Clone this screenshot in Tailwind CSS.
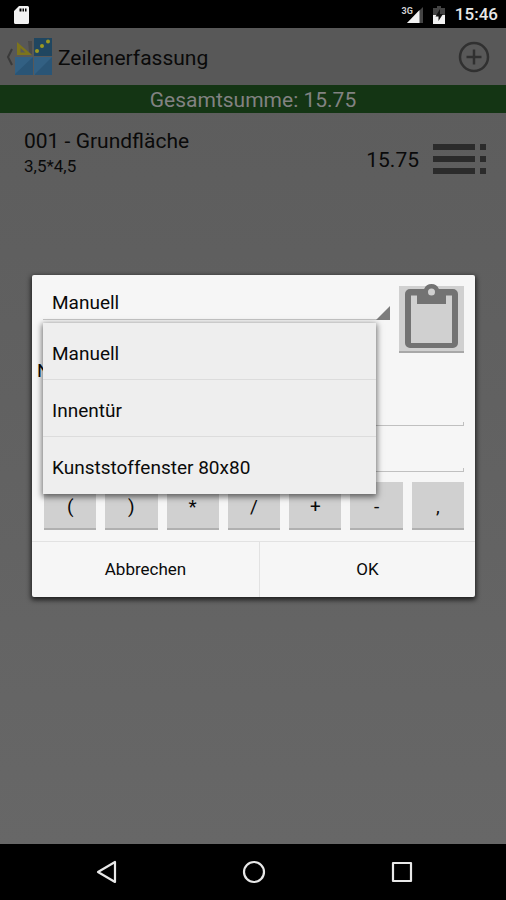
<!DOCTYPE html>
<html lang="de">
<head>
  <meta charset="UTF-8" />
  <meta name="viewport" content="width=device-width, initial-scale=1" />
  <title>Zeilenerfassung</title>
  <script src="https://cdn.jsdelivr.net/npm/@tailwindcss/browser@4"></script>
</head>
<body class="flex min-h-screen flex-col bg-black font-[Roboto,sans-serif] text-[#0a0a0a]">

  <!-- status bar -->
  <div class="flex h-7 items-center justify-between px-2 pt-0.5 text-white">
    <svg class="ml-1.5 h-[18px] w-[15px]" viewBox="0 0 15 18" fill="#f2f2f2">
      <path fill-rule="evenodd" d="M5 0h8.500a1.500 1.500 0 0 1 1.500 1.500v15a1.500 1.500 0 0 1-1.500 1.500h-12a1.500 1.500 0 0 1-1.500-1.500V5zM5.500 2.500v3h2v-3zm3 0v3h1.500v-3zm2.500 0v3h1.500v-3z" />
    </svg>
    <div class="flex items-center gap-2.5">
      <div class="flex items-start">
        <span class="-mr-1.5 text-[9px] leading-[9px] font-bold text-[#d0d0d0]">3G</span>
        <svg class="h-4 w-4" viewBox="0 0 16 16">
          <path d="M16 0v16H0z" fill="#444" />
          <path d="M12.500 3v13H0z" fill="#f2f2f2" />
        </svg>
      </div>
      <svg class="h-[18px] w-3" viewBox="0 0 12 18">
        <path d="M4 0h4v2h4v16H0V2h4z" fill="#444" />
        <path d="M0 9h12v9H0z" fill="#f2f2f2" />
        <path d="M7 3L2.500 10.500H5.500V15L10 8H7z" fill="#111" />
      </svg>
      <span class="text-[17px] font-medium text-[#e8e8e8]">15:46</span>
    </div>
  </div>

  <main class="relative flex grow flex-col bg-linear-to-b from-[#5c5c5c] to-[#676767]">
    <header class="flex h-[57px] items-center bg-[#585858] pl-1.5">
      <a href="#" class="flex items-center" aria-label="Zurück">
        <svg class="h-5 w-2" viewBox="0 0 8 20" fill="none" stroke="#3a3a3a" stroke-width="2">
          <path d="M6 2L2 10l4 8" />
        </svg>
        <svg class="h-10 w-10" viewBox="0 0 40 40">
          <path d="M20 1h18v18H20z" fill="#204660" />
          <path d="M1 20h18v18H1zM20 20h18v18H20z" fill="#326083" />
          <path d="M1 37L19 20v18H1zM21 37L38 20v18H21z" fill="#2a5576" />
          <path d="M14 4h4v14l-3-3z" fill="#4a4a4a" />
          <path fill-rule="evenodd" d="M3 5l15 13H3zM6.500 11v4.500h5z" fill="#7d741c" />
          <g fill="#9c9a20"><circle cx="23" cy="14" r="2" /><circle cx="28" cy="9" r="2" /><circle cx="34" cy="4.500" r="2" /></g>
        </svg>
      </a>
      <h1 class="ml-1 pt-1 text-[21px]">Zeilenerfassung</h1>
      <button type="button" class="mr-4 ml-auto" aria-label="Hinzufügen">
        <svg class="h-8 w-8" viewBox="0 0 32 32" fill="none" stroke="#303030" stroke-width="2.500">
          <circle cx="16" cy="16" r="14" />
          <path d="M16 8.500v15M8.500 16h15" />
        </svg>
      </button>
    </header>

    <div class="h-7 bg-[#143514] text-center text-[21px] leading-[31px] text-[#828282]">Gesamtsumme: 15.75</div>

    <ul>
      <li class="flex items-center py-3 pr-[19px] pl-6">
        <div>
          <div class="text-[21px] leading-[30px]">001 - Grundfläche</div>
          <div class="text-[17px] leading-5">3,5*4,5</div>
        </div>
        <span class="mt-5 ml-auto text-[21px]">15.75</span>
        <button type="button" class="mt-4 ml-3.5" aria-label="Menü">
          <svg class="h-8 w-[54px]" viewBox="0 0 54 32" fill="#2b2b2b">
            <path d="M0 1h42v6H0zM0 13h42v6H0zM0 25h42v6H0zM47 1h6v6h-6zM47 13h6v6h-6zM47 25h6v6h-6z" />
          </svg>
        </button>
      </li>
    </ul>

    <!-- dialog -->
    <div class="absolute inset-0 flex items-center pr-[31px] pl-8">
      <form role="dialog" class="w-full rounded-xs bg-[#f6f6f6] shadow-[0_2px_5px_1px_rgba(0,0,0,0.7)]">
        <div class="px-[11px] py-[11px]">
          <div class="flex gap-[9px]">
            <div class="relative grow">
              <select id="type" aria-label="Typ" class="h-[34px] w-full appearance-none border-b border-[#c6c6c6] px-[9px] pt-0.5 text-[19px]">
                <option>Manuell</option>
                <option>Innentür</option>
                <option>Kunststoffenster 80x80</option>
              </select>
              <svg class="absolute top-5 right-0 h-3.5 w-3.5" viewBox="0 0 14 14"><path d="M14 0v14H0z" fill="#7c7c7c" /></svg>
              <ul id="type-list" role="listbox" class="absolute top-[37px] right-3.5 left-0 z-10 divide-y divide-[#dcdcdc] bg-[#eee] shadow-[0_2px_6px_1px_rgba(0,0,0,0.55)]">
                <li role="option" class="h-[57px] cursor-pointer px-[9px] text-[19px] leading-[61px]">Manuell</li>
                <li role="option" class="h-[57px] cursor-pointer px-[9px] text-[19px] leading-[61px]">Innentür</li>
                <li role="option" class="h-[57px] cursor-pointer px-[9px] text-[19px] leading-[61px]">Kunststoffenster 80x80</li>
              </ul>
            </div>
            <button type="button" class="relative h-[67px] w-[65px] border-b-2 border-[#a8a8a8] bg-[#d0d0d0]" aria-label="Einfügen">
              <svg class="absolute -top-[3px] left-1.5 h-[66px] w-[53px]" viewBox="0 0 53 66">
                <path fill="#737373" fill-rule="evenodd" d="M5 6H19.100a8 8 0 0 1 14.800 0H48a5 5 0 0 1 5 5v49a5 5 0 0 1-5 5H5a5 5 0 0 1-5-5V11a5 5 0 0 1 5-5zM6 12.500V60H47V12.500H41V21H12V12.500zM26.500 5.500a3.500 3.500 0 1 0 0 7 3.500 3.500 0 0 0 0-7z" />
              </svg>
            </button>
          </div>

          <label for="name" class="-ml-1.5 block pt-1.5 text-[19px] leading-6">Name</label>
          <div class="relative">
            <input id="name" type="text" class="block h-[43px] w-full border-b border-[#c0c0c0] px-2.5 text-[19px] outline-none" />
            <span class="absolute inset-x-0 bottom-0 h-1 border-x border-[#c0c0c0]"></span>
          </div>
          <div class="relative">
            <input id="formula" type="text" aria-label="Formel" class="block h-[46px] w-full border-b border-[#c0c0c0] px-2.5 text-[19px] outline-none" />
            <span class="absolute inset-x-0 bottom-0 h-1 border-x border-[#c0c0c0]"></span>
          </div>

          <div class="mt-2.5 grid grid-cols-7 gap-[9px] pl-px text-[19px]">
            <button type="button" class="key h-12 border-b-2 border-[#b0b0b0] bg-[#d0d0d0] pt-1">(</button>
            <button type="button" class="key h-12 border-b-2 border-[#b0b0b0] bg-[#d0d0d0] pt-1">)</button>
            <button type="button" class="key h-12 border-b-2 border-[#b0b0b0] bg-[#d0d0d0] pt-1">*</button>
            <button type="button" class="key h-12 border-b-2 border-[#b0b0b0] bg-[#d0d0d0] pt-1">/</button>
            <button type="button" class="key h-12 border-b-2 border-[#b0b0b0] bg-[#d0d0d0] pt-1">+</button>
            <button type="button" class="key h-12 border-b-2 border-[#b0b0b0] bg-[#d0d0d0] pt-1">-</button>
            <button type="button" class="key h-12 border-b-2 border-[#b0b0b0] bg-[#d0d0d0] pt-1">,</button>
          </div>
        </div>

        <div class="grid h-14 grid-cols-[228fr_215fr] divide-x divide-[#e2e2e2] border-t border-[#e2e2e2] text-[17px]">
          <button type="button">Abbrechen</button>
          <button type="button">OK</button>
        </div>
      </form>
    </div>
  </main>

  <!-- navigation bar -->
  <nav class="flex h-14 items-center justify-center gap-[124px] bg-black pl-0.5">
    <button type="button" aria-label="Zurück">
      <svg class="h-6 w-6" viewBox="0 0 24 24" fill="none" stroke="#e8e8e8" stroke-width="2.200" stroke-linejoin="round"><path d="M21 2v20L4 12z" /></svg>
    </button>
    <button type="button" aria-label="Start">
      <svg class="h-6 w-6" viewBox="0 0 24 24" fill="none" stroke="#e8e8e8" stroke-width="2.200"><circle cx="12" cy="12" r="10" /></svg>
    </button>
    <button type="button" aria-label="Übersicht">
      <svg class="h-6 w-6" viewBox="0 0 24 24" fill="none" stroke="#e8e8e8" stroke-width="2.200" stroke-linejoin="round"><path d="M3 3h18v18H3z" /></svg>
    </button>
  </nav>

  <script>
    const select = document.getElementById("type");
    const list = document.getElementById("type-list");
    const formula = document.getElementById("formula");

    list.querySelectorAll("li").forEach((item, i) => {
      item.addEventListener("click", () => {
        select.selectedIndex = i;
        list.classList.add("hidden");
      });
    });

    document.querySelectorAll(".key").forEach((key) => {
      key.addEventListener("click", () => {
        formula.value += key.textContent;
      });
    });
  </script>
</body>
</html>
